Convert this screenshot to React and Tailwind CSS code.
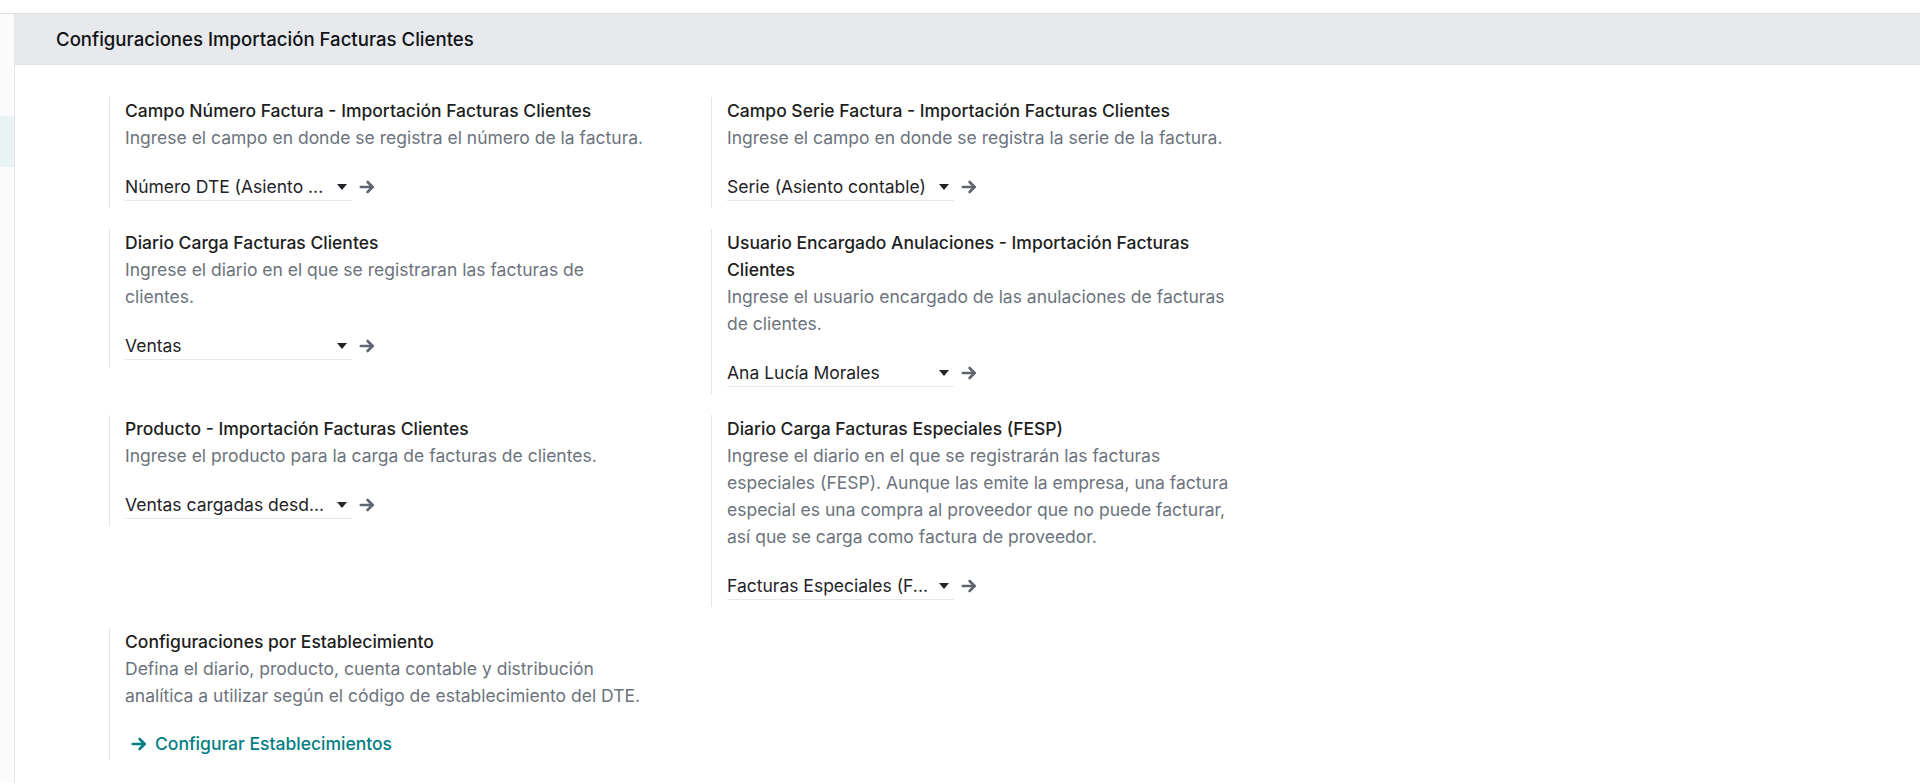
import React from 'react'

// Configuraciones de importación de facturas de clientes (pantalla de ajustes)

function Caret() {
  return (
    <svg className="w-[10px] h-[6px] text-[#212529]" viewBox="0 0 10 6" fill="currentColor">
      <path d="M0 0h10L5 6z" />
    </svg>
  )
}

function Arrow({ className = 'text-[#5f6670]' }) {
  return (
    <svg className={`w-[16px] h-[16px] ${className}`} viewBox="0 0 16 16" fill="none" stroke="currentColor" strokeWidth={2.6} strokeLinecap="round" strokeLinejoin="round">
      <path d="M1.8 8h11.8" />
      <path d="M8.6 3L13.6 8l-5 5" />
    </svg>
  )
}

function ManyField({ value }) {
  return (
    <div className="mt-[22px] flex items-center h-[28px]">
      <div className="w-[227px] h-[28px] flex items-center justify-between border-b border-[#e5e7eb] pr-[5px]">
        <span className="text-[#1f2328]">{value}</span>
        <Caret />
      </div>
      <span className="ml-[7px] flex items-center">
        <Arrow />
      </span>
    </div>
  )
}

function SettingBox({ title, description, children }) {
  return (
    <div className="border-l border-[#e2e4e8] pl-[15px] pb-[7px] w-[560px]">
      <div className="font-medium text-[#1c1e21]">{title}</div>
      <div className="text-[#6c737d]">{description}</div>
      {children}
    </div>
  )
}

export default function App() {
  return (
    <div className="min-h-screen bg-white font-['Inter','Noto_Sans',sans-serif] text-[17.5px] leading-[27px] antialiased">
      <div className="h-[14px] border-b border-[#dcdee2]" />
      <div className="flex">
        <aside className="w-[15px] shrink-0 border-r border-[#e3e5e8] bg-[#fbfbfc] min-h-[769px]">
          <div className="mt-[102px] h-[51px] bg-[#e8f3f3]" />
        </aside>
        <main className="flex-1">
          <div className="h-[51px] bg-[#e7e9ed] border-b border-[#e1e3e7] flex items-center pl-[41px]">
            <h2 className="text-[18.6px] font-medium text-[#111317]">Configuraciones Importación Facturas Clientes</h2>
          </div>

          <div className="pl-[94px] pt-[32px] grid grid-cols-[602px_602px] gap-y-[21px] items-start">
            <SettingBox
              title="Campo Número Factura - Importación Facturas Clientes"
              description="Ingrese el campo en donde se registra el número de la factura."
            >
              <ManyField value="Número DTE (Asiento ..." />
            </SettingBox>

            <SettingBox
              title="Campo Serie Factura - Importación Facturas Clientes"
              description="Ingrese el campo en donde se registra la serie de la factura."
            >
              <ManyField value="Serie (Asiento contable)" />
            </SettingBox>

            <SettingBox
              title="Diario Carga Facturas Clientes"
              description={<>Ingrese el diario en el que se registraran las facturas de<br />clientes.</>}
            >
              <ManyField value="Ventas" />
            </SettingBox>

            <SettingBox
              title={<>Usuario Encargado Anulaciones - Importación Facturas<br />Clientes</>}
              description={<>Ingrese el usuario encargado de las anulaciones de facturas<br />de clientes.</>}
            >
              <ManyField value="Ana Lucía Morales" />
            </SettingBox>

            <SettingBox
              title="Producto - Importación Facturas Clientes"
              description="Ingrese el producto para la carga de facturas de clientes."
            >
              <ManyField value="Ventas cargadas desd..." />
            </SettingBox>

            <SettingBox
              title="Diario Carga Facturas Especiales (FESP)"
              description={
                <>
                  Ingrese el diario en el que se registrarán las facturas<br />
                  especiales (FESP). Aunque las emite la empresa, una factura<br />
                  especial es una compra al proveedor que no puede facturar,<br />
                  así que se carga como factura de proveedor.
                </>
              }
            >
              <ManyField value="Facturas Especiales (F..." />
            </SettingBox>

            <div className="border-l border-[#e2e4e8] pl-[15px] pb-[3px] w-[560px]">
              <div className="font-medium text-[#1c1e21]">Configuraciones por Establecimiento</div>
              <div className="text-[#6c737d]">
                Defina el diario, producto, cuenta contable y distribución<br />
                analítica a utilizar según el código de establecimiento del DTE.
              </div>
              <button className="mt-[21px] pl-[6px] flex items-center gap-[8px] text-[#017e84] font-medium h-[27px]">
                <Arrow className="text-[#017e84]" />
                <span>Configurar Establecimientos</span>
              </button>
            </div>
          </div>
        </main>
      </div>
    </div>
  )
}
